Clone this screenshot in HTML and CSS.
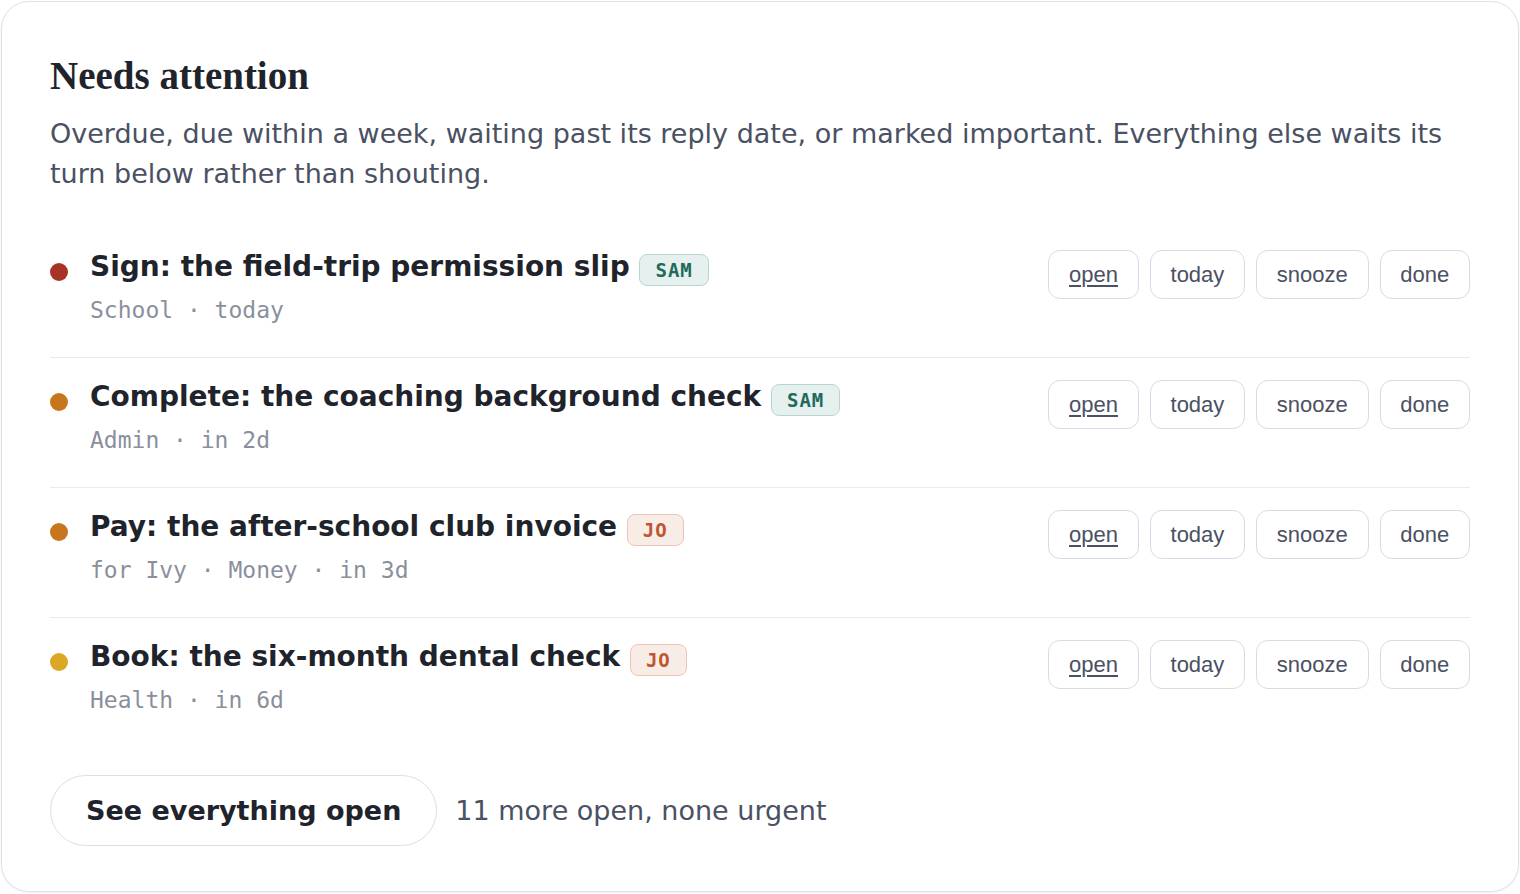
FILE: index.html
```html
<!DOCTYPE html>
<html lang="en">
<head>
<meta charset="utf-8">
<title>Needs attention</title>
<link rel="stylesheet" href="styles.css">
</head>
<body>
<div class="page">
  <section class="card">
    <h1 class="title">Needs attention</h1>
    <p class="desc">Overdue, due within a week, waiting past its reply date, or marked important. Everything else waits its turn below rather than shouting.</p>

    <ul class="list">
      <li class="row">
        <span class="dot dot-red"></span>
        <div class="main">
          <div class="item-title">Sign: the field-trip permission slip <span class="tag tag-sam">SAM</span></div>
          <div class="meta">School · today</div>
        </div>
        <div class="actions">
          <a class="btn btn-link" href="#">open</a>
          <button class="btn">today</button>
          <button class="btn">snooze</button>
          <button class="btn">done</button>
        </div>
      </li>
      <li class="row">
        <span class="dot dot-orange"></span>
        <div class="main">
          <div class="item-title">Complete: the coaching background check <span class="tag tag-sam">SAM</span></div>
          <div class="meta">Admin · in 2d</div>
        </div>
        <div class="actions">
          <a class="btn btn-link" href="#">open</a>
          <button class="btn">today</button>
          <button class="btn">snooze</button>
          <button class="btn">done</button>
        </div>
      </li>
      <li class="row">
        <span class="dot dot-orange"></span>
        <div class="main">
          <div class="item-title">Pay: the after-school club invoice <span class="tag tag-jo">JO</span></div>
          <div class="meta">for Ivy · Money · in 3d</div>
        </div>
        <div class="actions">
          <a class="btn btn-link" href="#">open</a>
          <button class="btn">today</button>
          <button class="btn">snooze</button>
          <button class="btn">done</button>
        </div>
      </li>
      <li class="row">
        <span class="dot dot-amber"></span>
        <div class="main">
          <div class="item-title">Book: the six-month dental check <span class="tag tag-jo">JO</span></div>
          <div class="meta">Health · in 6d</div>
        </div>
        <div class="actions">
          <a class="btn btn-link" href="#">open</a>
          <button class="btn">today</button>
          <button class="btn">snooze</button>
          <button class="btn">done</button>
        </div>
      </li>
    </ul>

    <div class="footer">
      <button class="pill">See everything open</button>
      <span class="footer-note">11 more open, none urgent</span>
    </div>
  </section>
</div>
</body>
</html>
```

FILE: styles.css
```css
html, body {
  margin: 0;
  padding: 0;
  background: #ffffff;
}

.page {
  padding: 1px;
}

.card {
  box-sizing: border-box;
  width: 1518px;
  border: 1.5px solid #dfe1ec;
  border-radius: 28px;
  background: #ffffff;
  box-shadow: 0 1px 2px rgba(40, 45, 70, 0.08);
  padding: 50px 48px 45px 48px;
  font-family: "DejaVu Sans", sans-serif;
  color: #1f232b;
}

.title {
  margin: 0;
  font-family: "Liberation Serif", "Times New Roman", serif;
  font-weight: 700;
  font-size: 39px;
  line-height: 48px;
  color: #1f232b;
}

.desc {
  margin: 14px 0 0 0;
  font-size: 27px;
  line-height: 40px;
  color: #4a5163;
}

.list {
  list-style: none;
  margin: 34px 0 0 0;
  padding: 0;
}

.row {
  display: grid;
  grid-template-columns: 40px 1fr auto;
  align-items: start;
  padding: 20px 0 30px 0;
  border-bottom: 1.5px solid #e8eaf0;
}

.row:last-child {
  border-bottom: none;
}

.dot {
  width: 18px;
  height: 18px;
  border-radius: 50%;
  margin-top: 15px;
}

.dot-red { background: #a93226; }
.dot-orange { background: #c8761e; }
.dot-amber { background: #dca725; }

.item-title {
  font-weight: 700;
  font-size: 28px;
  line-height: 38px;
  color: #1f232b;
}

.tag {
  display: inline-block;
  vertical-align: -1px;
  margin-left: 0;
  padding: 0 15px;
  height: 30px;
  line-height: 30px;
  border-radius: 8px;
  font-family: "DejaVu Sans Mono", monospace;
  font-weight: 700;
  font-size: 19px;
  letter-spacing: 1px;
}

.tag-sam {
  background: #e6f0ee;
  border: 1.5px solid #b7d6cf;
  color: #1e6b5c;
}

.tag-jo {
  background: #f8ece6;
  border: 1.5px solid #ecc5b4;
  color: #c0562f;
}

.meta {
  margin-top: 7px;
  font-family: "DejaVu Sans Mono", monospace;
  font-size: 23px;
  line-height: 34px;
  color: #8a8f9c;
}

.actions {
  display: flex;
  gap: 11px;
  margin-top: 2px;
}

.btn {
  box-sizing: border-box;
  display: inline-flex;
  align-items: center;
  justify-content: center;
  height: 49px;
  padding: 0 19.75px;
  border: 1.5px solid #d8dbe7;
  border-radius: 12px;
  background: #ffffff;
  font-family: "Liberation Sans", Arial, sans-serif;
  font-size: 22px;
  color: #4a5163;
  text-decoration: none;
  cursor: pointer;
}

.btn-link {
  text-decoration: underline;
  text-underline-offset: 3px;
}

.footer {
  display: flex;
  align-items: center;
  gap: 18px;
  margin-top: 28px;
}

.pill {
  box-sizing: border-box;
  height: 71px;
  padding: 0 35px;
  border: 1.5px solid #dcdfea;
  border-radius: 36px;
  background: #ffffff;
  font-family: "DejaVu Sans", sans-serif;
  font-weight: 700;
  font-size: 27px;
  color: #1f232b;
  cursor: pointer;
}

.footer-note {
  font-size: 27px;
  color: #4a5163;
}
```
